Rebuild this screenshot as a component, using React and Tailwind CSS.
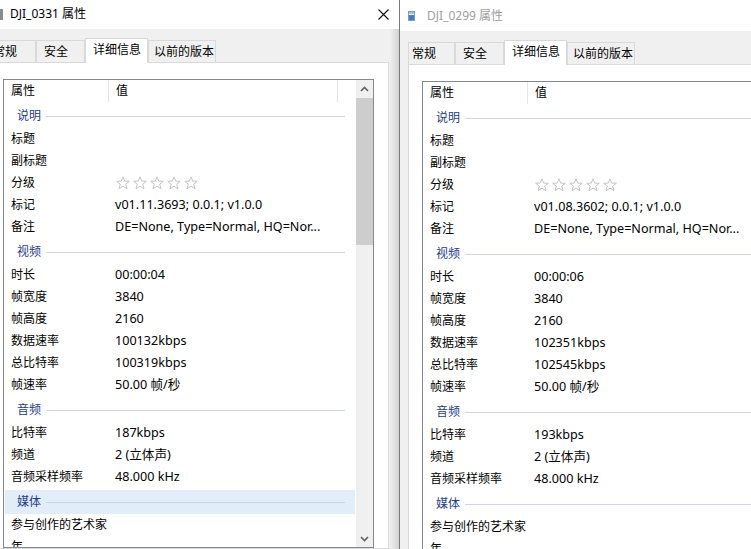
import React from 'react';

const note = 'DE=None, Type=Normal, HQ=Nor...';

const files = [
  {
    title: 'DJI_0331 属性',
    active: true,
    tag: 'v01.11.3693; 0.0.1; v1.0.0',
    duration: '00:00:04',
    dataRate: '100132kbps',
    totalRate: '100319kbps',
    audioRate: '187kbps',
  },
  {
    title: 'DJI_0299 属性',
    active: false,
    tag: 'v01.08.3602; 0.0.1; v1.0.0',
    duration: '00:00:06',
    dataRate: '102351kbps',
    totalRate: '102545kbps',
    audioRate: '193kbps',
  },
];

const buildRows = (f) => [
  { group: '说明' },
  { k: '标题' },
  { k: '副标题' },
  { k: '分级', stars: true },
  { k: '标记', v: f.tag },
  { k: '备注', v: note },
  { group: '视频' },
  { k: '时长', v: f.duration },
  { k: '帧宽度', v: '3840' },
  { k: '帧高度', v: '2160' },
  { k: '数据速率', v: f.dataRate },
  { k: '总比特率', v: f.totalRate },
  { k: '帧速率', v: '50.00 帧/秒' },
  { group: '音频' },
  { k: '比特率', v: f.audioRate },
  { k: '频道', v: '2 (立体声)' },
  { k: '音频采样频率', v: '48.000 kHz' },
  { group: '媒体', selected: f.active },
  { k: '参与创作的艺术家' },
  { k: '年' },
  { k: '流派' },
];

const Star = () => (
  <svg width="14" height="14" viewBox="0 0 14 14">
    <polygon
      points="7,0.8 8.7,5.1 13.3,5.3 9.7,8.2 11,12.8 7,10.2 3,12.8 4.3,8.2 0.7,5.3 5.3,5.1"
      fill="none"
      stroke="#c4c4c4"
      strokeWidth="1"
    />
  </svg>
);

const Chevron = ({ up }) => (
  <svg width="9" height="6" viewBox="0 0 9 6">
    <path
      d={up ? 'M1 5 L4.5 1.5 L8 5' : 'M1 1 L4.5 4.5 L8 1'}
      fill="none"
      stroke="#606060"
      strokeWidth="1.6"
    />
  </svg>
);

const Tab = ({ children, w, pl, selected }) => (
  <div
    className={
      selected
        ? `${w} ${pl} h-[25px] -mb-px pb-[2px] bg-white border border-b-0 border-[#d9d9d9] flex items-center whitespace-nowrap`
        : `${w} ${pl} h-[22px] bg-[#f0f0f0] border border-b-0 border-[#d9d9d9] flex items-center whitespace-nowrap`
    }
  >
    {children}
  </div>
);

const PropWindow = ({ file, className }) => {
  const rows = buildRows(file);
  return (
    <div className={`w-[419px] h-[551px] shrink-0 flex flex-col border-l border-[#7a7a7a] ${className}`}>
      {/* Title bar */}
      <div className="h-[31px] shrink-0 bg-white flex items-center pt-px">
        {file.active ? (
          <>
            <div className="ml-[19px] w-[3px] h-[11px] bg-[#8a8a8a]" />
            <span className="ml-[7px] text-black">{file.title}</span>
          </>
        ) : (
          <>
            <svg className="ml-[8px]" width="7" height="10" viewBox="0 0 7 10">
              <rect x="0.5" y="0.5" width="6" height="9" fill="#ffffff" stroke="#8a9ab0" />
              <rect x="1" y="4" width="5" height="5" fill="#3d7fc6" />
              <rect x="1" y="1" width="5" height="2" fill="#9cc0e6" />
            </svg>
            <span className="ml-[12px] text-[#a0a0a0]">{file.title}</span>
          </>
        )}
        <svg className="ml-auto mr-[10px]" width="11" height="11" viewBox="0 0 11 11">
          <path d="M0.5 0.5 L10.5 10.5 M10.5 0.5 L0.5 10.5" stroke={file.active ? '#111' : '#999'} strokeWidth="1.1" />
        </svg>
      </div>

      {/* Body */}
      <div className="flex-1 flex flex-col pl-[8px] pr-[10px] pt-[9px] bg-[linear-gradient(to_left,#d2d2d2,#f0f0f0_9px)]">
        <div className="h-[24px] flex items-end relative z-10">
          <Tab w="w-[47px]" pl="pl-[3px]">常规</Tab>
          <Tab w="w-[49px]" pl="pl-[7px]">安全</Tab>
          <Tab w="w-[63px]" pl="pl-[7px]" selected>详细信息</Tab>
          <Tab w="w-[68px]" pl="pl-[5px]">以前的版本</Tab>
        </div>

        <div className="flex-1 bg-white border border-[#d9d9d9] pt-[16px] pl-[13px]">
          <div className="w-[371px] h-[469px] border border-[#828790] flex overflow-hidden">
            <div className="w-[352px] shrink-0 flex flex-col overflow-hidden">
              {/* Header */}
              <div className="h-[22px] shrink-0 flex">
                <div className="w-[105px] shrink-0 pl-[7px] border-r border-[#e5e5e5] flex items-center">属性</div>
                <div className="w-[229px] shrink-0 pl-[7px] border-r border-[#e5e5e5] flex items-center">值</div>
              </div>
              {rows.map((r, i) =>
                r.group ? (
                  <div
                    key={i}
                    className={`mt-[2px] mx-px h-[24px] shrink-0 flex items-center pl-[12px] ${r.selected ? 'bg-[#e1edf9]' : ''}`}
                  >
                    <span className="text-[#1e3c8c]">{r.group}</span>
                    <div className="flex-1 h-px bg-[#cdd4e2] ml-[5px] mr-[10px]" />
                  </div>
                ) : (
                  <div key={i} className="h-[22px] shrink-0 flex items-center whitespace-nowrap">
                    <span className="w-[105px] shrink-0 pl-[7px]">{r.k}</span>
                    {r.stars ? (
                      <div className="pl-[7px] flex gap-[3px]">
                        <Star /><Star /><Star /><Star /><Star />
                      </div>
                    ) : (
                      <span className="pl-[6px] text-[12.6px]">{r.v}</span>
                    )}
                  </div>
                )
              )}
            </div>

            {/* Scrollbar */}
            <div className="w-[17px] shrink-0 bg-[#f0f0f0] flex flex-col">
              <div className="h-[18px] flex items-center justify-center">
                <Chevron up />
              </div>
              <div className="h-[147px] bg-[#cdcdcd]" />
              <div className="flex-1" />
              <div className="h-[17px] flex items-center justify-center">
                <Chevron />
              </div>
            </div>
          </div>
        </div>
      </div>
    </div>
  );
};

export default function App() {
  return (
    <div className="w-[751px] h-[549px] overflow-hidden flex bg-[#f0f0f0] text-[12px] text-black font-['Noto_Sans','Noto_Sans_CJK_SC',sans-serif]">
      <PropWindow file={files[0]} className="ml-[-20px] mt-[-2px]" />
      <PropWindow file={files[1]} className="" />
    </div>
  );
}
